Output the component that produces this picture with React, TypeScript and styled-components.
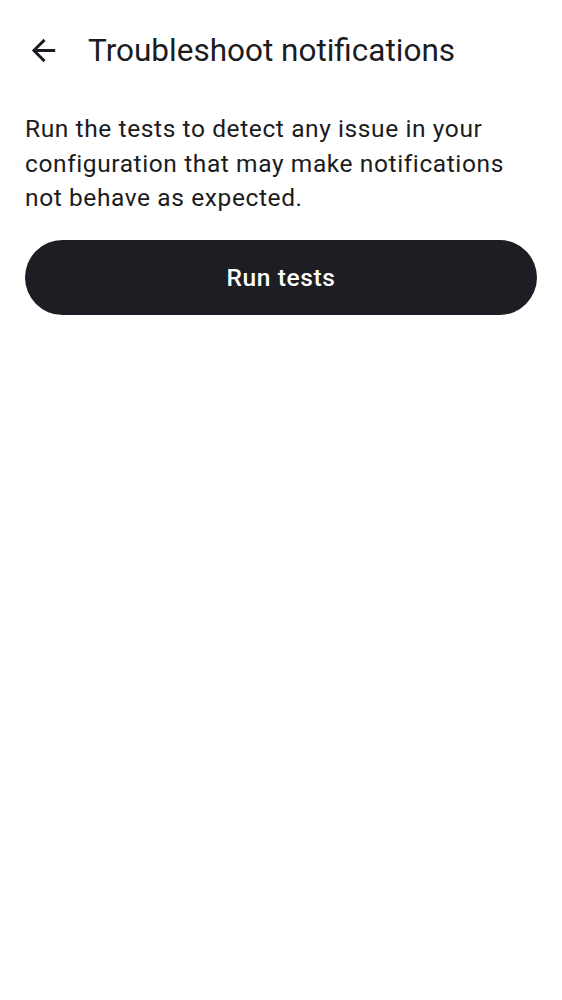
import React from "react";
import styled, { createGlobalStyle } from "styled-components";

const GlobalStyle = createGlobalStyle`
    html, body {
        margin: 0;
        padding: 0;
        background: #ffffff;
    }
    body {
        font-family: Roboto, "Noto Sans", sans-serif;
        color: #1b1c21;
    }
`

const Page = styled.main`
    width: 100%;
    min-height: 1000px;
    display: flex;
    flex-direction: column;
`

const TopBar = styled.header`
    height: 100px;
    display: flex;
    align-items: center;
    padding: 0 0 0 8px;
    box-sizing: border-box;
`

const BackButton = styled.button`
    width: 70px;
    height: 70px;
    border: none;
    background: transparent;
    padding: 0;
    display: flex;
    align-items: center;
    justify-content: center;
    color: #1b1c21;
    margin-right: 10px;
`

const Title = styled.h1`
    margin: 0;
    font-size: 31.5px;
    font-weight: 400;
    color: #1b1c21;
    letter-spacing: 0;
`

const Content = styled.section`
    padding: 12px 25px 0 25px;
    display: flex;
    flex-direction: column;
    gap: 24.5px;
`

const Description = styled.p`
    margin: 0;
    font-size: 24.5px;
    line-height: 34.5px;
    color: #1b1c21;
    letter-spacing: 0.6px;
`

const PrimaryButton = styled.button`
    width: 100%;
    height: 75px;
    border: none;
    border-radius: 38px;
    background-color: #1d1e23;
    color: #ffffff;
    font-family: Roboto, "Noto Sans", sans-serif;
    font-size: 24.5px;
    font-weight: 500;
    letter-spacing: 0.6px;
`

const ArrowBack: React.FC = () => (
    <svg width="35" height="35" viewBox="0 0 24 24" fill="currentColor">
        <path d="M20 11H7.83l5.59-5.59L12 4l-8 8 8 8 1.41-1.41L7.83 13H20v-2z" />
    </svg>
)

const App: React.FC = () => {
    return (
        <Page>
            <GlobalStyle />
            <TopBar>
                <BackButton aria-label="Back">
                    <ArrowBack />
                </BackButton>
                <Title>Troubleshoot notifications</Title>
            </TopBar>
            <Content>
                <Description>
                    Run the tests to detect any issue in your configuration that may make notifications not behave as expected.
                </Description>
                <PrimaryButton>Run tests</PrimaryButton>
            </Content>
        </Page>
    )
}

export default App;
